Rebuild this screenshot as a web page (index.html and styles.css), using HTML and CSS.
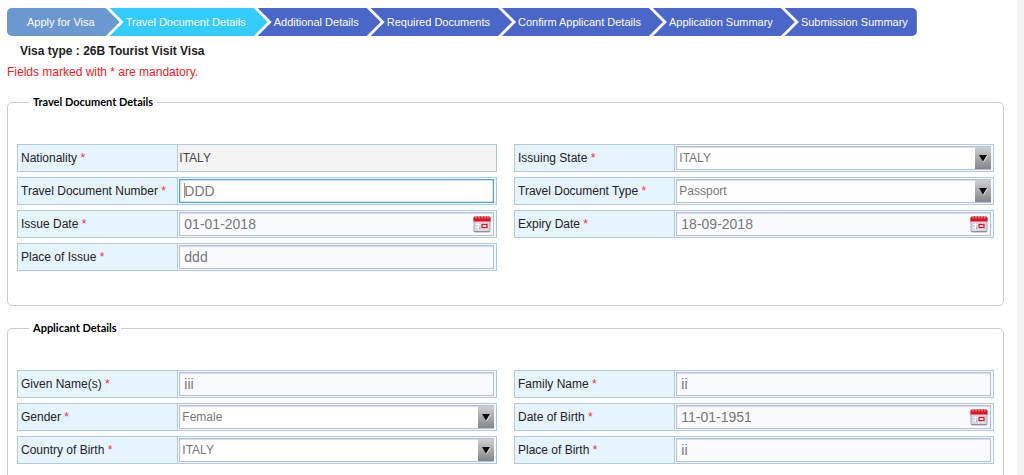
FILE: index.html
```html
<!DOCTYPE html>
<html lang="en">
<head>
<meta charset="utf-8">
<title>Travel Document Details</title>
<link rel="stylesheet" href="styles.css">
</head>
<body>
<svg class="sprite" aria-hidden="true">
  <symbol id="calendar" viewBox="0 0 18 18">
    <rect x="1" y="1.500" width="16" height="15.500" rx="1.500" fill="#d6d6e6" stroke="#a5a5b8"/>
    <path d="M1 16.500h16" stroke="#8e8ea0"/>
    <path d="M.5 6.500V3q0-1.500 1.500-1.500h14q1.500 0 1.500 1.500v3.500z" fill="#e01323"/>
    <path d="M3 1v2.500M6 1v2.500M9 1v2.500M12 1v2.500M15 1v2.500" stroke="#f3b6bb"/>
    <path d="M3 9.500h12M3 12.500h12M5.500 8v7M8.500 8v7M12.500 8v7" stroke="#f6f6fc"/>
    <rect x="9" y="9.500" width="5" height="3" fill="#fff" stroke="#e01323" stroke-width="1.300"/>
    <path d="M6 13h1.500" stroke="#777790"/>
  </symbol>
  <symbol id="arrow" viewBox="0 0 16 21">
    <path d="M4 7.500h8L8 14z" fill="#0c0c0c"/>
    <path d="M12.500 8L8.500 14.500" stroke="#fff" stroke-opacity=".7"/>
  </symbol>
</svg>
<main class="page">
  <nav aria-label="Application steps">
    <ol class="steps">
      <li class="step step-done">Apply for Visa</li>
      <li class="step step-current" aria-current="step">Travel Document Details</li>
      <li class="step">Additional Details</li>
      <li class="step">Required Documents</li>
      <li class="step">Confirm Applicant Details</li>
      <li class="step">Application Summary</li>
      <li class="step">Submission Summary</li>
    </ol>
  </nav>
  <h1 class="visa-type">Visa type : 26B Tourist Visit Visa</h1>
  <p class="notice">Fields marked with * are mandatory.</p>
  <form>
    <fieldset class="group">
      <legend class="group-title">Travel Document Details</legend>
      <div class="columns">
        <div class="column">
          <div class="field"><label class="name" for="nationality">Nationality <span class="req">*</span></label><div class="cell cell-readonly"><input class="plain" id="nationality" value="ITALY" readonly></div></div>
          <div class="field"><label class="name" for="number">Travel Document Number <span class="req">*</span></label><div class="cell"><input class="box box-active" id="number" value="DDD"></div></div>
          <div class="field"><label class="name" for="issued">Issue Date <span class="req">*</span></label><div class="cell"><input class="box" id="issued" value="01-01-2018"><button class="pick" type="button" aria-label="Choose issue date"><svg><use href="#calendar"/></svg></button></div></div>
          <div class="field"><label class="name" for="issue-place">Place of Issue <span class="req">*</span></label><div class="cell"><input class="box" id="issue-place" value="ddd"></div></div>
        </div>
        <div class="column">
          <div class="field"><label class="name" for="state">Issuing State <span class="req">*</span></label><div class="cell"><select class="box choice" id="state"><option>ITALY</option></select><svg class="drop"><use href="#arrow"/></svg></div></div>
          <div class="field"><label class="name" for="type">Travel Document Type <span class="req">*</span></label><div class="cell"><select class="box choice" id="type"><option>Passport</option></select><svg class="drop"><use href="#arrow"/></svg></div></div>
          <div class="field"><label class="name" for="expiry">Expiry Date <span class="req">*</span></label><div class="cell"><input class="box" id="expiry" value="18-09-2018"><button class="pick" type="button" aria-label="Choose expiry date"><svg><use href="#calendar"/></svg></button></div></div>
        </div>
      </div>
    </fieldset>
    <fieldset class="group">
      <legend class="group-title">Applicant Details</legend>
      <div class="columns">
        <div class="column">
          <div class="field"><label class="name" for="given">Given Name(s) <span class="req">*</span></label><div class="cell"><input class="box" id="given" value="iii"></div></div>
          <div class="field"><label class="name" for="gender">Gender <span class="req">*</span></label><div class="cell"><select class="box choice" id="gender"><option>Female</option></select><svg class="drop"><use href="#arrow"/></svg></div></div>
          <div class="field"><label class="name" for="country">Country of Birth <span class="req">*</span></label><div class="cell"><select class="box choice" id="country"><option>ITALY</option></select><svg class="drop"><use href="#arrow"/></svg></div></div>
        </div>
        <div class="column">
          <div class="field"><label class="name" for="family">Family Name <span class="req">*</span></label><div class="cell"><input class="box" id="family" value="ii"></div></div>
          <div class="field"><label class="name" for="born">Date of Birth <span class="req">*</span></label><div class="cell"><input class="box" id="born" value="11-01-1951"><button class="pick" type="button" aria-label="Choose date of birth"><svg><use href="#calendar"/></svg></button></div></div>
          <div class="field"><label class="name" for="birth-place">Place of Birth <span class="req">*</span></label><div class="cell"><input class="box" id="birth-place" value="ii"></div></div>
        </div>
      </div>
    </fieldset>
  </form>
</main>
</body>
</html>
```
FILE: styles.css
```css
* { box-sizing: border-box; }
body {
  margin: 0;
  background: #f3f3f3;
  font: 12px/16px "Liberation Sans", Arial, sans-serif;
  color: #222;
}
.sprite { display: none; }
.page {
  margin-right: 7px;
  padding: 8px 13px 20px 7px;
  background: #fff;
}
.steps {
  display: flex;
  margin: 0;
  padding: 0;
  list-style: none;
  font-size: 11px;
  line-height: 28px;
  color: #fff;
}
.step {
  margin-left: -10px;
  padding: 0 22px 0 16px;
  white-space: nowrap;
  background: #4a66c8;
  clip-path: polygon(0 0, calc(100% - 14px) 0, 100% 50%, calc(100% - 14px) 100%, 0 100%, 14px 50%);
}
.step-done {
  margin-left: 0;
  padding-left: 20px;
  padding-right: 25px;
  background: #6b98d0;
  border-radius: 5px 0 0 5px;
  clip-path: polygon(0 0, calc(100% - 14px) 0, 100% 50%, calc(100% - 14px) 100%, 0 100%);
}
.step-current { background: #33ccff; }
.step:last-child {
  padding-right: 9px;
  border-radius: 0 5px 5px 0;
  clip-path: polygon(0 0, 100% 0, 100% 100%, 0 100%, 14px 50%);
}
.visa-type {
  margin: 7px 0 0 13px;
  font-size: 12px;
  line-height: 16px;
}
.notice { margin: 5px 0 0; color: #ee1c25; }
.group {
  min-width: 0;
  margin: 14px 0 0;
  padding: 34px 9px;
  border: 1px solid #ccc;
  border-radius: 5px;
}
.group-title {
  margin-left: 12px;
  padding: 0 4px;
  font: bold 11px/16px Lato, sans-serif;
  color: #000;
}
.columns {
  display: grid;
  grid-template-columns: 1fr 1fr;
  gap: 17px;
}
.column { display: grid; gap: 5px; align-content: start; }
.field {
  display: grid;
  grid-template-columns: 1fr 2fr;
  height: 28px;
  border: 1px solid #b3c9de;
}
.name {
  padding-left: 3px;
  line-height: 26px;
  white-space: nowrap;
  background: #e6f4fe;
}
.req { color: #f0303c; }
.cell {
  display: grid;
  align-items: center;
  padding: 1px 2px 1px 1px;
  border-left: 1px solid #b3c9de;
  background: #f4f9fd;
}
.cell > * { grid-area: 1 / 1; }
.cell-readonly { background: #f4f4f4; }
.plain {
  width: 100%;
  padding: 0;
  border: 0;
  background: none;
  font: inherit;
  color: #444;
}
.box {
  width: 100%;
  height: 24px;
  padding: 0 4px;
  border: 1px solid #b5bfd6;
  border-radius: 0;
  outline: 0;
  background: #fafbfe;
  box-shadow: inset 0 1px 1px #d5dbe8;
  font: 14px/20px "Liberation Sans", Arial, sans-serif;
  color: #777;
}
.box-active {
  border-color: #4da3e8;
  background: linear-gradient(#b98c62, #b98c62) 4px 3px / 1px 15px no-repeat #fff;
  box-shadow: inset 0 0 2px #4da3e8;
}
.choice {
  appearance: none;
  padding: 0 20px 0 2px;
  background: #fff;
  font-size: 12px;
}
.drop {
  justify-self: end;
  width: 16px;
  height: 22px;
  background: linear-gradient(#cfd0d3, #858689);
  pointer-events: none;
}
.pick {
  justify-self: end;
  width: 18px;
  height: 18px;
  margin-right: 3px;
  padding: 0;
  border: 0;
  background: none;
}
.pick svg { display: block; width: 18px; height: 18px; }
```
